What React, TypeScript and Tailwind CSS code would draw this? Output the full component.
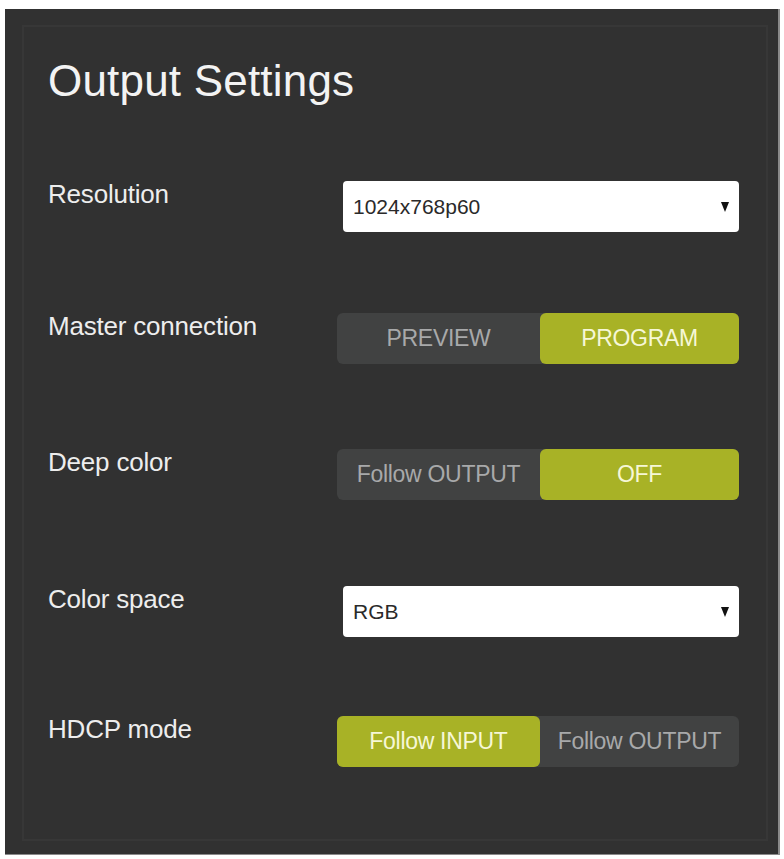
// Output settings panel: a dark card with labelled dropdowns and two-way toggles.

type Row =
  | { label: string; gap: string; kind: "select"; value: string }
  | { label: string; gap: string; kind: "toggle"; options: [string, string]; active: 0 | 1 };

const ROWS: Row[] = [
  { label: "Resolution", gap: "mt-[78px]", kind: "select", value: "1024x768p60" },
  { label: "Master connection", gap: "mt-[81px]", kind: "toggle", options: ["PREVIEW", "PROGRAM"], active: 1 },
  { label: "Deep color", gap: "mt-[85px]", kind: "toggle", options: ["Follow OUTPUT", "OFF"], active: 1 },
  { label: "Color space", gap: "mt-[86px]", kind: "select", value: "RGB" },
  { label: "HDCP mode", gap: "mt-[79px]", kind: "toggle", options: ["Follow INPUT", "Follow OUTPUT"], active: 0 },
];

function Select({ value }: { value: string }) {
  return (
    <div className="ml-[6px] flex h-[51px] items-center justify-between rounded-[4px] bg-white pl-[10px] pr-[10px]">
      <span className="text-[21px] text-[#2a2a2a]">{value}</span>
      <svg width="8" height="10" viewBox="0 0 8 10" className="mt-[1px]">
        <path d="M0 0H8L4 10Z" fill="#111" />
      </svg>
    </div>
  );
}

function Toggle({ options, active }: { options: [string, string]; active: 0 | 1 }) {
  return (
    <div className="flex h-[51px] rounded-[6px] bg-[#414242]">
      {options.map((opt, i) => (
        <div
          key={opt}
          className={
            (i === 0 ? "w-[203px] " : "flex-1 ") +
            "flex items-center justify-center rounded-[6px] text-[23px] tracking-[-0.3px] " +
            (i === active ? "bg-[#a8b226] text-[#f6f7d6]" : "text-[#a8a9aa]")
          }
        >
          {opt}
        </div>
      ))}
    </div>
  );
}

export default function App() {
  return (
    <div
      className="h-[859px] w-[784px] bg-white pl-[5px] pr-[4px] pt-[9px] pb-[4px]"
      style={{ fontFamily: '"Liberation Sans", Arial, sans-serif' }}
    >
      <div className="h-[846px] w-[775px] border-r-2 border-b border-[#8a8a8a] bg-[#313131] pl-[17px] pr-[10px] pt-[16px] pb-[13px]">
        <div className="h-full border-2 border-[#373737] pl-[24px] pr-[27px] pt-[32px]">
          <h1 className="text-[44px] leading-[44px] tracking-[0.2px] text-[#f3f3f3]">Output Settings</h1>

          <div className="flex flex-col">
            {ROWS.map((row) => (
              <div key={row.label} className={row.gap + " grid grid-cols-[289px_402px] items-start"}>
                <div className="text-[26px] leading-[26px] tracking-[-0.2px] text-[#ededed]">{row.label}</div>
                {row.kind === "select" ? (
                  <Select value={row.value} />
                ) : (
                  <Toggle options={row.options} active={row.active} />
                )}
              </div>
            ))}
          </div>
        </div>
      </div>
    </div>
  );
}
